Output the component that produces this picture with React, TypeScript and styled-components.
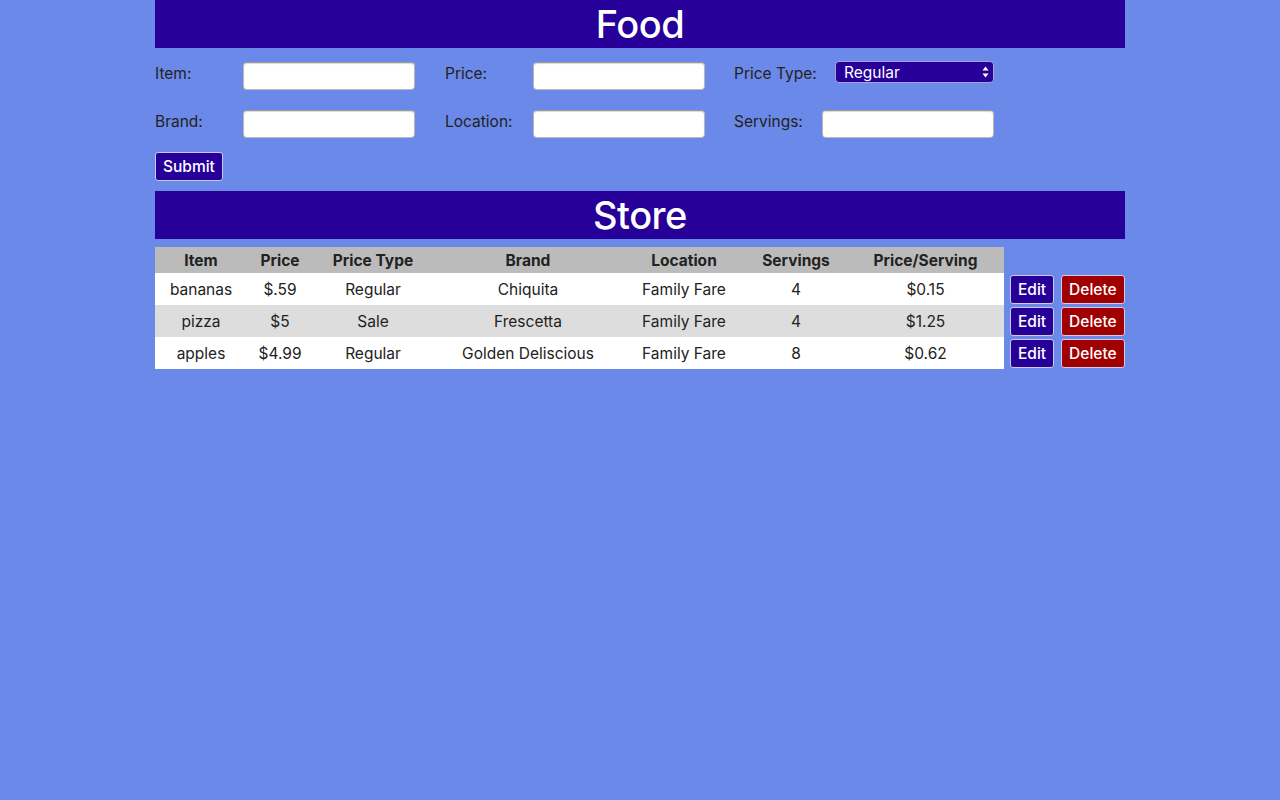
import React from "react"
import styled, { createGlobalStyle } from "styled-components"

const GlobalStyle = createGlobalStyle`
  html, body {
    margin: 0;
    padding: 0;
    background: #6b89e8;
    font-family: "Inter", "Liberation Sans", sans-serif;
    color: #222;
  }
`

const PageDiv = styled.div`
  width: 970px;
  margin: 0 auto;
  min-height: 800px;
`

const BannerH1 = styled.h1<{ $gap?: number }>`
  margin: ${({ $gap }) => $gap ?? 0}px 0 0;
  height: 48px;
  line-height: 48px;
  background: #260099;
  color: #fff;
  text-align: center;
  font-size: 38px;
  font-weight: 500;
  letter-spacing: -0.5px;
`

const FormDiv = styled.form`
  display: flex;
  flex-direction: column;
  padding-top: 14px;
`

const FieldRow = styled.div`
  display: flex;
  align-items: flex-start;
  height: 48px;
`

const FieldDiv = styled.div`
  display: flex;
  align-items: flex-start;
  width: 290px;
  &:nth-child(2) {
    width: 289px;
  }
`

const FieldLabel = styled.label<{ $width: number }>`
  width: ${({ $width }) => $width}px;
  font-size: 15.5px;
  line-height: 23px;
`

const TextInput = styled.input`
  box-sizing: border-box;
  width: 172px;
  height: 28px;
  border: 1px solid #b8b8b8;
  border-top-color: #9a9a9a;
  border-radius: 4px;
  background: #fff;
  box-shadow: inset 0 1px 1px rgba(0, 0, 0, 0.15);
  outline: none;
`

const SelectWrap = styled.div`
  position: relative;
  width: 159px;
  height: 22px;
  margin-top: -1px;
`

const PriceSelect = styled.select`
  appearance: none;
  box-sizing: border-box;
  width: 100%;
  height: 22px;
  padding: 0 0 0 8px;
  border: 1px solid #a9a3d6;
  border-radius: 4px;
  background: #260099;
  color: #fff;
  font-family: "Inter", "Liberation Sans", sans-serif;
  font-size: 15.5px;
`

const ArrowsSvg = styled.svg`
  position: absolute;
  right: 5px;
  top: 5px;
  pointer-events: none;
`

const SubmitButton = styled.button`
  align-self: flex-start;
  height: 29px;
  padding: 0 7px;
  background: #260099;
  color: #fff;
  border: 1px solid #c9c9e6;
  border-radius: 3px;
  font-family: "Inter", "Liberation Sans", sans-serif;
  font-size: 15.5px;
  font-weight: 500;
  margin-top: -6px;
`

const StoreTable = styled.table`
  border-collapse: collapse;
  margin-top: 8px;
  width: 970px;
  table-layout: fixed;
`

const HeadCell = styled.th<{ $blank?: boolean }>`
  height: 26px;
  padding: 0;
  background: ${({ $blank }) => ($blank ? "transparent" : "#bbbbbb")};
  font-size: 15.5px;
  font-weight: 700;
  text-align: center;
`

const BodyRow = styled.tr<{ $shade: boolean }>`
  & > td:not(:last-child) {
    background: ${({ $shade }) => ($shade ? "#dddddd" : "#ffffff")};
  }
`

const BodyCell = styled.td`
  height: 32px;
  padding: 0;
  text-align: center;
  font-size: 15.5px;
`

const ActionCell = styled.td`
  padding: 0 0 0 6px;
  white-space: nowrap;
`

const ActionButton = styled.button<{ $danger?: boolean }>`
  height: 29px;
  padding: 0 7px;
  margin-right: 7px;
  vertical-align: middle;
  background: ${({ $danger }) => ($danger ? "#a00000" : "#260099")};
  color: #fff;
  border: 1px solid #d0cce8;
  border-radius: 3px;
  font-family: "Inter", "Liberation Sans", sans-serif;
  font-size: 15.5px;
  font-weight: 500;
`

const columns = [
  { title: "Item", width: 92 },
  { title: "Price", width: 66 },
  { title: "Price Type", width: 120 },
  { title: "Brand", width: 190 },
  { title: "Location", width: 122 },
  { title: "Servings", width: 102 },
  { title: "Price/Serving", width: 157 },
]

const foods = [
  ["bananas", "$.59", "Regular", "Chiquita", "Family Fare", "4", "$0.15"],
  ["pizza", "$5", "Sale", "Frescetta", "Family Fare", "4", "$1.25"],
  ["apples", "$4.99", "Regular", "Golden Deliscious", "Family Fare", "8", "$0.62"],
]

export default function App() {
  return (
    <>
      <GlobalStyle />
      <PageDiv>
        <BannerH1>Food</BannerH1>
        <FormDiv onSubmit={(e) => e.preventDefault()}>
          <FieldRow>
            <FieldDiv>
              <FieldLabel $width={88}>Item:</FieldLabel>
              <TextInput />
            </FieldDiv>
            <FieldDiv>
              <FieldLabel $width={88}>Price:</FieldLabel>
              <TextInput />
            </FieldDiv>
            <FieldDiv>
              <FieldLabel $width={101}>Price Type:</FieldLabel>
              <SelectWrap>
                <PriceSelect defaultValue="Regular">
                  <option>Regular</option>
                  <option>Sale</option>
                </PriceSelect>
                <ArrowsSvg width="7" height="12" viewBox="0 0 7 12">
                  <path d="M3.5 0.5 L6.5 4.5 H0.5 Z M3.5 11.5 L6.5 7.5 H0.5 Z" fill="#fff" />
                </ArrowsSvg>
              </SelectWrap>
            </FieldDiv>
          </FieldRow>
          <FieldRow>
            <FieldDiv>
              <FieldLabel $width={88}>Brand:</FieldLabel>
              <TextInput />
            </FieldDiv>
            <FieldDiv>
              <FieldLabel $width={88}>Location:</FieldLabel>
              <TextInput />
            </FieldDiv>
            <FieldDiv>
              <FieldLabel $width={88}>Servings:</FieldLabel>
              <TextInput />
            </FieldDiv>
          </FieldRow>
          <SubmitButton type="submit">Submit</SubmitButton>
        </FormDiv>
        <BannerH1 $gap={10}>Store</BannerH1>
        <StoreTable>
          <colgroup>
            {columns.map((c) => (
              <col key={c.title} style={{ width: c.width }} />
            ))}
            <col />
          </colgroup>
          <thead>
            <tr>
              {columns.map((c) => (
                <HeadCell key={c.title}>{c.title}</HeadCell>
              ))}
              <HeadCell $blank />
            </tr>
          </thead>
          <tbody>
            {foods.map((row, i) => (
              <BodyRow key={row[0]} $shade={i % 2 === 1}>
                {row.map((value, j) => (
                  <BodyCell key={j}>{value}</BodyCell>
                ))}
                <ActionCell>
                  <ActionButton>Edit</ActionButton>
                  <ActionButton $danger>Delete</ActionButton>
                </ActionCell>
              </BodyRow>
            ))}
          </tbody>
        </StoreTable>
      </PageDiv>
    </>
  )
}
